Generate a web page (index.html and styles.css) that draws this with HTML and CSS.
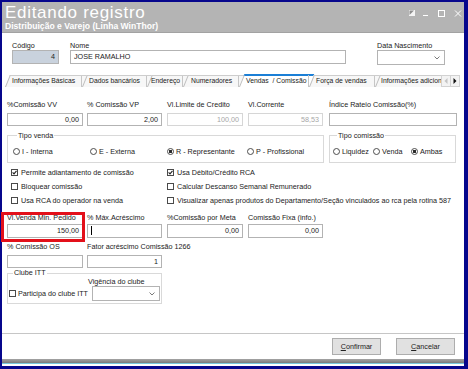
FILE: index.html
```html
<!DOCTYPE html>
<html>
  <head>
    <meta charset="UTF-8" />
    <title>Editando registro</title>
    <link rel="stylesheet" href="styles.css">
  </head>
  <body>
    <div class="window">
      <div class="titlebar">
        <div>
          <div class="title">Editando registro</div>
          <div class="subtitle">Distribuição e Varejo (Linha WinThor)</div>
        </div>
        <svg class="win-buttons" width="54" height="8" viewBox="0 0 54 8">
          <rect x="0.5" y="0.5" width="5" height="5" fill="#f4f4f4" stroke="#f4f4f4" />
          <polygon points="0.5,0.5 5,0.5 0.5,5" fill="#8e8e8e" />
          <line x1="14" y1="5.5" x2="19" y2="5.5" stroke="#fff" />
          <rect x="29.5" y="0.5" width="6" height="6" fill="none" stroke="#fff" />
          <path d="M46 0.5 L52 6.5 M52 0.5 L46 6.5" stroke="#fff" />
        </svg>
      </div>

      <div class="head">
        <div class="fld f-codigo">
          <label>Código</label>
          <div class="input num locked">4</div>
        </div>
        <div class="fld f-nome">
          <label>Nome</label>
          <div class="input">JOSE RAMALHO</div>
        </div>
        <div class="fld f-nasc">
          <label>Data Nascimento</label>
          <div class="input combo">
            <svg width="6" height="4" viewBox="0 0 6 4"><polyline points="0.5,0.5 3,3 5.5,0.5" fill="none" stroke="#7a7a7a" /></svg>
          </div>
        </div>
      </div>

      <div class="tabs">
        <div class="tab-list">
          <div class="tab t1">Informações Básicas</div>
          <div class="tab t2">Dados bancários</div>
          <div class="tab t3">Endereço</div>
          <div class="tab t4">Numeradores</div>
          <div class="tab t5 active">Vendas &nbsp;/ Comissão</div>
          <div class="tab t6">Força de vendas</div>
          <div class="tab t7">Informações adicionais</div>
        </div>
        <div class="tab-arrows">
          <div class="arrow"><svg width="4" height="6" viewBox="0 0 4 6"><polygon points="3.5,0 3.5,6 0.5,3" fill="#c4c4c4" /></svg></div>
          <div class="arrow"><svg width="4" height="6" viewBox="0 0 4 6"><polygon points="0.5,0 0.5,6 3.5,3" fill="#111" /></svg></div>
        </div>
      </div>

      <div class="pane">
        <!-- linha 1 -->
        <div class="grid5 row1">
          <div class="fld"><label>%Comissão VV</label><div class="input num w76">0,00</div></div>
          <div class="fld"><label>% Comissão VP</label><div class="input num w75">2,00</div></div>
          <div class="fld"><label>Vl.Limite de Credito</label><div class="input num w76 disabled">100,00</div></div>
          <div class="fld"><label>Vl.Corrente</label><div class="input num w75 disabled">58,53</div></div>
          <div class="fld"><label>Índice Rateio Comissão(%)</label><div class="input w128"></div></div>
        </div>

        <div class="groups">
          <fieldset class="group tipo-venda">
            <legend>Tipo venda</legend>
            <div class="radios">
              <span class="radio"><i class="dot"></i>I - Interna</span>
              <span class="radio"><i class="dot"></i>E - Externa</span>
              <span class="radio"><i class="dot on"></i>R - Representante</span>
              <span class="radio"><i class="dot"></i>P - Profissional</span>
            </div>
          </fieldset>
          <fieldset class="group tipo-comissao">
            <legend>Tipo comissão</legend>
            <div class="radios">
              <span class="radio"><i class="dot"></i>Liquidez</span>
              <span class="radio"><i class="dot"></i>Venda</span>
              <span class="radio"><i class="dot on"></i>Ambas</span>
            </div>
          </fieldset>
        </div>

        <div class="checks">
          <span class="check"><i class="box on"></i>Permite adiantamento de comissão</span>
          <span class="check"><i class="box on"></i>Usa Débito/Crédito RCA</span>
          <span class="check"><i class="box"></i>Bloquear comissão</span>
          <span class="check"><i class="box"></i>Calcular Descanso Semanal Remunerado</span>
          <span class="check"><i class="box"></i>Usa RCA do operador na venda</span>
          <span class="check"><i class="box"></i>Visualizar apenas produtos do Departamento/Seção vinculados ao rca pela rotina 587</span>
        </div>

        <div class="grid5 row3">
          <div class="fld marked">
            <label>Vl.Venda Min. Pedido</label><div class="input num w76">150,00</div>
            <div class="highlight"></div>
          </div>
          <div class="fld"><label>% Máx.Acréscimo</label><div class="input w75"><span class="caret"></span></div></div>
          <div class="fld"><label>%Comissão por Meta</label><div class="input num w76">0,00</div></div>
          <div class="fld"><label>Comissão Fixa (info.)</label><div class="input num w75">0,00</div></div>
        </div>

        <div class="grid5 row4">
          <div class="fld"><label>% Comissão OS</label><div class="input num w76"></div></div>
          <div class="fld"><label class="wide">Fator acréscimo Comissão 1266</label><div class="input num w75">1</div></div>
        </div>

        <fieldset class="group clube">
          <legend>Clube ITT</legend>
          <div class="clube-body">
            <span class="check"><i class="box"></i>Participa do clube ITT</span>
            <div class="clube-right">
              <label>Vigência do clube</label>
              <div class="input combo">
                <svg width="6" height="4" viewBox="0 0 6 4"><polyline points="0.5,0.5 3,3 5.5,0.5" fill="none" stroke="#7a7a7a" /></svg>
              </div>
            </div>
          </div>
        </fieldset>
      </div>

      <div class="footer">
        <button class="btn confirm"><u>C</u>onfirmar</button>
        <button class="btn cancel"><u>C</u>ancelar</button>
      </div>
      <div class="statusbar"></div>
    </div>
  </body>
</html>
```

FILE: styles.css
```css
*,
*::after,
*::before {
  box-sizing: border-box;
}
body {
  margin: 0;
  width: 468px;
  height: 369px;
  overflow: hidden;
  font-family: 'Liberation Sans', Arial, sans-serif;
  font-size: 7.2px;
  color: #222;
  background-color: #06068c;
}
/* janela */
.window {
  display: flex;
  flex-direction: column;
  width: 462px;
  height: 364px;
  margin: 2px 0 0 2px;
  background-color: #fff;
}
.titlebar {
  flex: none;
  display: flex;
  justify-content: space-between;
  height: 31px;
  padding: 3px 1px 0 3px;
  color: #fff;
  background-color: #b4b4b4;
  border-bottom: 1px solid #a2a2a2;
}
.title {
  font-size: 17px;
  line-height: 16px;
  letter-spacing: 0.7px;
}
.subtitle {
  margin-top: 1px;
  font-size: 8.6px;
  font-weight: bold;
  line-height: 8px;
}
.win-buttons {
  margin-top: 5px;
}

/* campos */
.fld {
  position: relative;
}
.fld label {
  display: block;
  height: 9px;
  line-height: 9px;
  white-space: nowrap;
}
.input {
  height: 14px;
  padding: 0 3px;
  line-height: 12px;
  white-space: nowrap;
  background-color: #fff;
  border: 1px solid #b3b3b3;
}
.input.num {
  text-align: right;
}
.input.locked {
  background-color: #c9d2dd;
}
.input.disabled {
  color: #a6a6a6;
  border-color: #d6d6d6;
}
.input.combo {
  display: flex;
  align-items: center;
  justify-content: flex-end;
  padding-right: 4px;
  height: 15px;
}
.caret {
  display: inline-block;
  width: 1px;
  height: 9px;
  margin-top: 1px;
  vertical-align: top;
  background-color: #000;
}

.head {
  flex: none;
  display: flex;
  height: 41px;
  padding: 8px 0 0 10px;
}
.f-codigo .input {
  width: 47px;
}
.f-nome {
  margin-left: 11px;
}
.f-nome .input {
  width: 276px;
}
.f-nasc {
  margin-left: 31px;
}
.f-nasc .input {
  width: 68px;
}

/* abas */
.tabs {
  flex: none;
  display: flex;
  align-items: flex-end;
  height: 13px;
  margin-left: 3px;
}
.tab-list {
  display: flex;
  align-items: flex-end;
  width: 436px;
  height: 13px;
  overflow: hidden;
}
.tab {
  position: relative;
  z-index: 0;
  flex: none;
  height: 12px;
  padding-left: 7px;
  font-size: 6.8px;
  line-height: 12px;
  white-space: nowrap;
  color: #222;
}
.tab::before {
  content: '';
  position: absolute;
  z-index: -1;
  top: 0;
  bottom: 0;
  left: 0;
  right: 0;
  background-color: #f7f7f7;
  border-top: 1px solid #cdcdcd;
  border-left: 1px solid #bdbdbd;
  transform: skewX(-22deg);
  transform-origin: bottom left;
}
.tab::after {
  content: '';
  position: absolute;
  top: 1px;
  bottom: 0;
  right: 0;
  border-right: 1px solid #c6c6c6;
}
.tab.active {
  height: 13px;
  line-height: 14px;
}
.tab.active::before {
  background-color: #fff;
  border-top: 2px solid #1b7fd6;
}
.t1 { width: 77px; }
.t2 { width: 65px; }
.t3 { width: 36px; padding-left: 4px; }
.t4 { width: 56px; padding-left: 8px; }
.t5 { width: 70px; }
.t6 { width: 66px; }
.t7 { width: 80px; padding-left: 6px; }
.tab-arrows {
  display: flex;
  height: 12px;
}
.arrow {
  display: flex;
  align-items: center;
  justify-content: center;
  width: 10px;
  height: 12px;
  background-color: #f3f3f3;
  border: 1px solid #d2d2d2;
}
.arrow + .arrow {
  width: 9px;
  border-left: none;
}

/* conteudo da aba */
.pane {
  flex: 1;
  padding: 13px 0 0 5px;
}
.grid5 {
  display: grid;
  grid-template-columns: 80px 80px 81px 81px 128px;
}
.row1 .input {
  height: 13px;
  line-height: 11px;
  margin-top: 4px;
}
.w75 { width: 75px; }
.w76 { width: 76px; }
.w128 { width: 128px; }

.group {
  min-width: 0;
  margin: 0;
  border: 1px solid #d9d9d9;
}
.group legend {
  margin-left: 4px;
  padding: 0 1px;
  line-height: 9px;
}
.groups {
  display: flex;
  gap: 5px;
  margin-top: 5px;
}
.tipo-venda {
  width: 317px;
  padding: 7px 0 6px 5px;
}
.tipo-comissao {
  width: 127px;
  padding: 7px 0 6px 3px;
}
.radios {
  display: grid;
  line-height: 9px;
}
.tipo-venda .radios {
  grid-template-columns: 77px 77px 80px auto;
}
.tipo-comissao .radios {
  grid-template-columns: 40px 38px auto;
}
.radio,
.check {
  display: flex;
  align-items: center;
  gap: 2px;
  white-space: nowrap;
}
.dot {
  flex: none;
  width: 7px;
  height: 7px;
  border: 1px solid #4d4d4d;
  border-radius: 50%;
}
.dot.on {
  background: radial-gradient(circle, #2a2a2a 0 1.4px, #fff 1.9px);
}
.box {
  flex: none;
  width: 7px;
  height: 7px;
  margin-right: 1px;
  border: 1px solid #4a4a4a;
}
.box.on {
  background: url("data:image/svg+xml,%3Csvg xmlns='http://www.w3.org/2000/svg' width='5' height='5'%3E%3Cpolyline points='0.6,2.4 2,3.9 4.5,0.8' fill='none' stroke='%23222' stroke-width='1.1'/%3E%3C/svg%3E") no-repeat center;
}

.checks {
  display: grid;
  grid-template-columns: 156px auto;
  grid-auto-rows: 14px;
  margin: 2px 0 0 4px;
}

.row3 {
  margin-top: 6px;
}
.row3 .input {
  margin-top: 2px;
}
.highlight {
  position: absolute;
  top: -1px;
  left: -6px;
  width: 84px;
  height: 30px;
  border: 3px solid #e3101a;
}
.row4 {
  margin-top: 4px;
}
.row4 .input {
  height: 13px;
  line-height: 11px;
  margin-top: 4px;
}

.clube {
  width: 155px;
  margin-top: 1px;
  padding: 0 1px 2px 1px;
}
.clube legend {
  line-height: 8px;
}
.clube-body {
  display: flex;
  align-items: flex-end;
  justify-content: space-between;
}
.clube-body .check {
  height: 15px;
  gap: 1px;
}
.clube-right label {
  display: block;
  line-height: 9px;
}
.clube-right .input {
  width: 68px;
  margin-left: 4px;
}

/* rodape */
.footer {
  flex: none;
  display: flex;
  justify-content: flex-end;
  gap: 15px;
  height: 26px;
  padding: 4px 9px 0 0;
  border-top: 1px solid #c6c6c6;
}
.btn {
  height: 17px;
  padding: 0;
  font-family: inherit;
  font-size: 7.2px;
  color: #222;
  background-color: #e1e1e1;
  border: 1px solid #adadad;
}
.confirm {
  width: 49px;
}
.cancel {
  width: 59px;
}
.statusbar {
  flex: none;
  height: 7px;
  background: linear-gradient(#a4a4a4 0, #7a7a7a 4px, #79c9dc 4px, #79c9dc 5px, #fff 5px);
}
```
